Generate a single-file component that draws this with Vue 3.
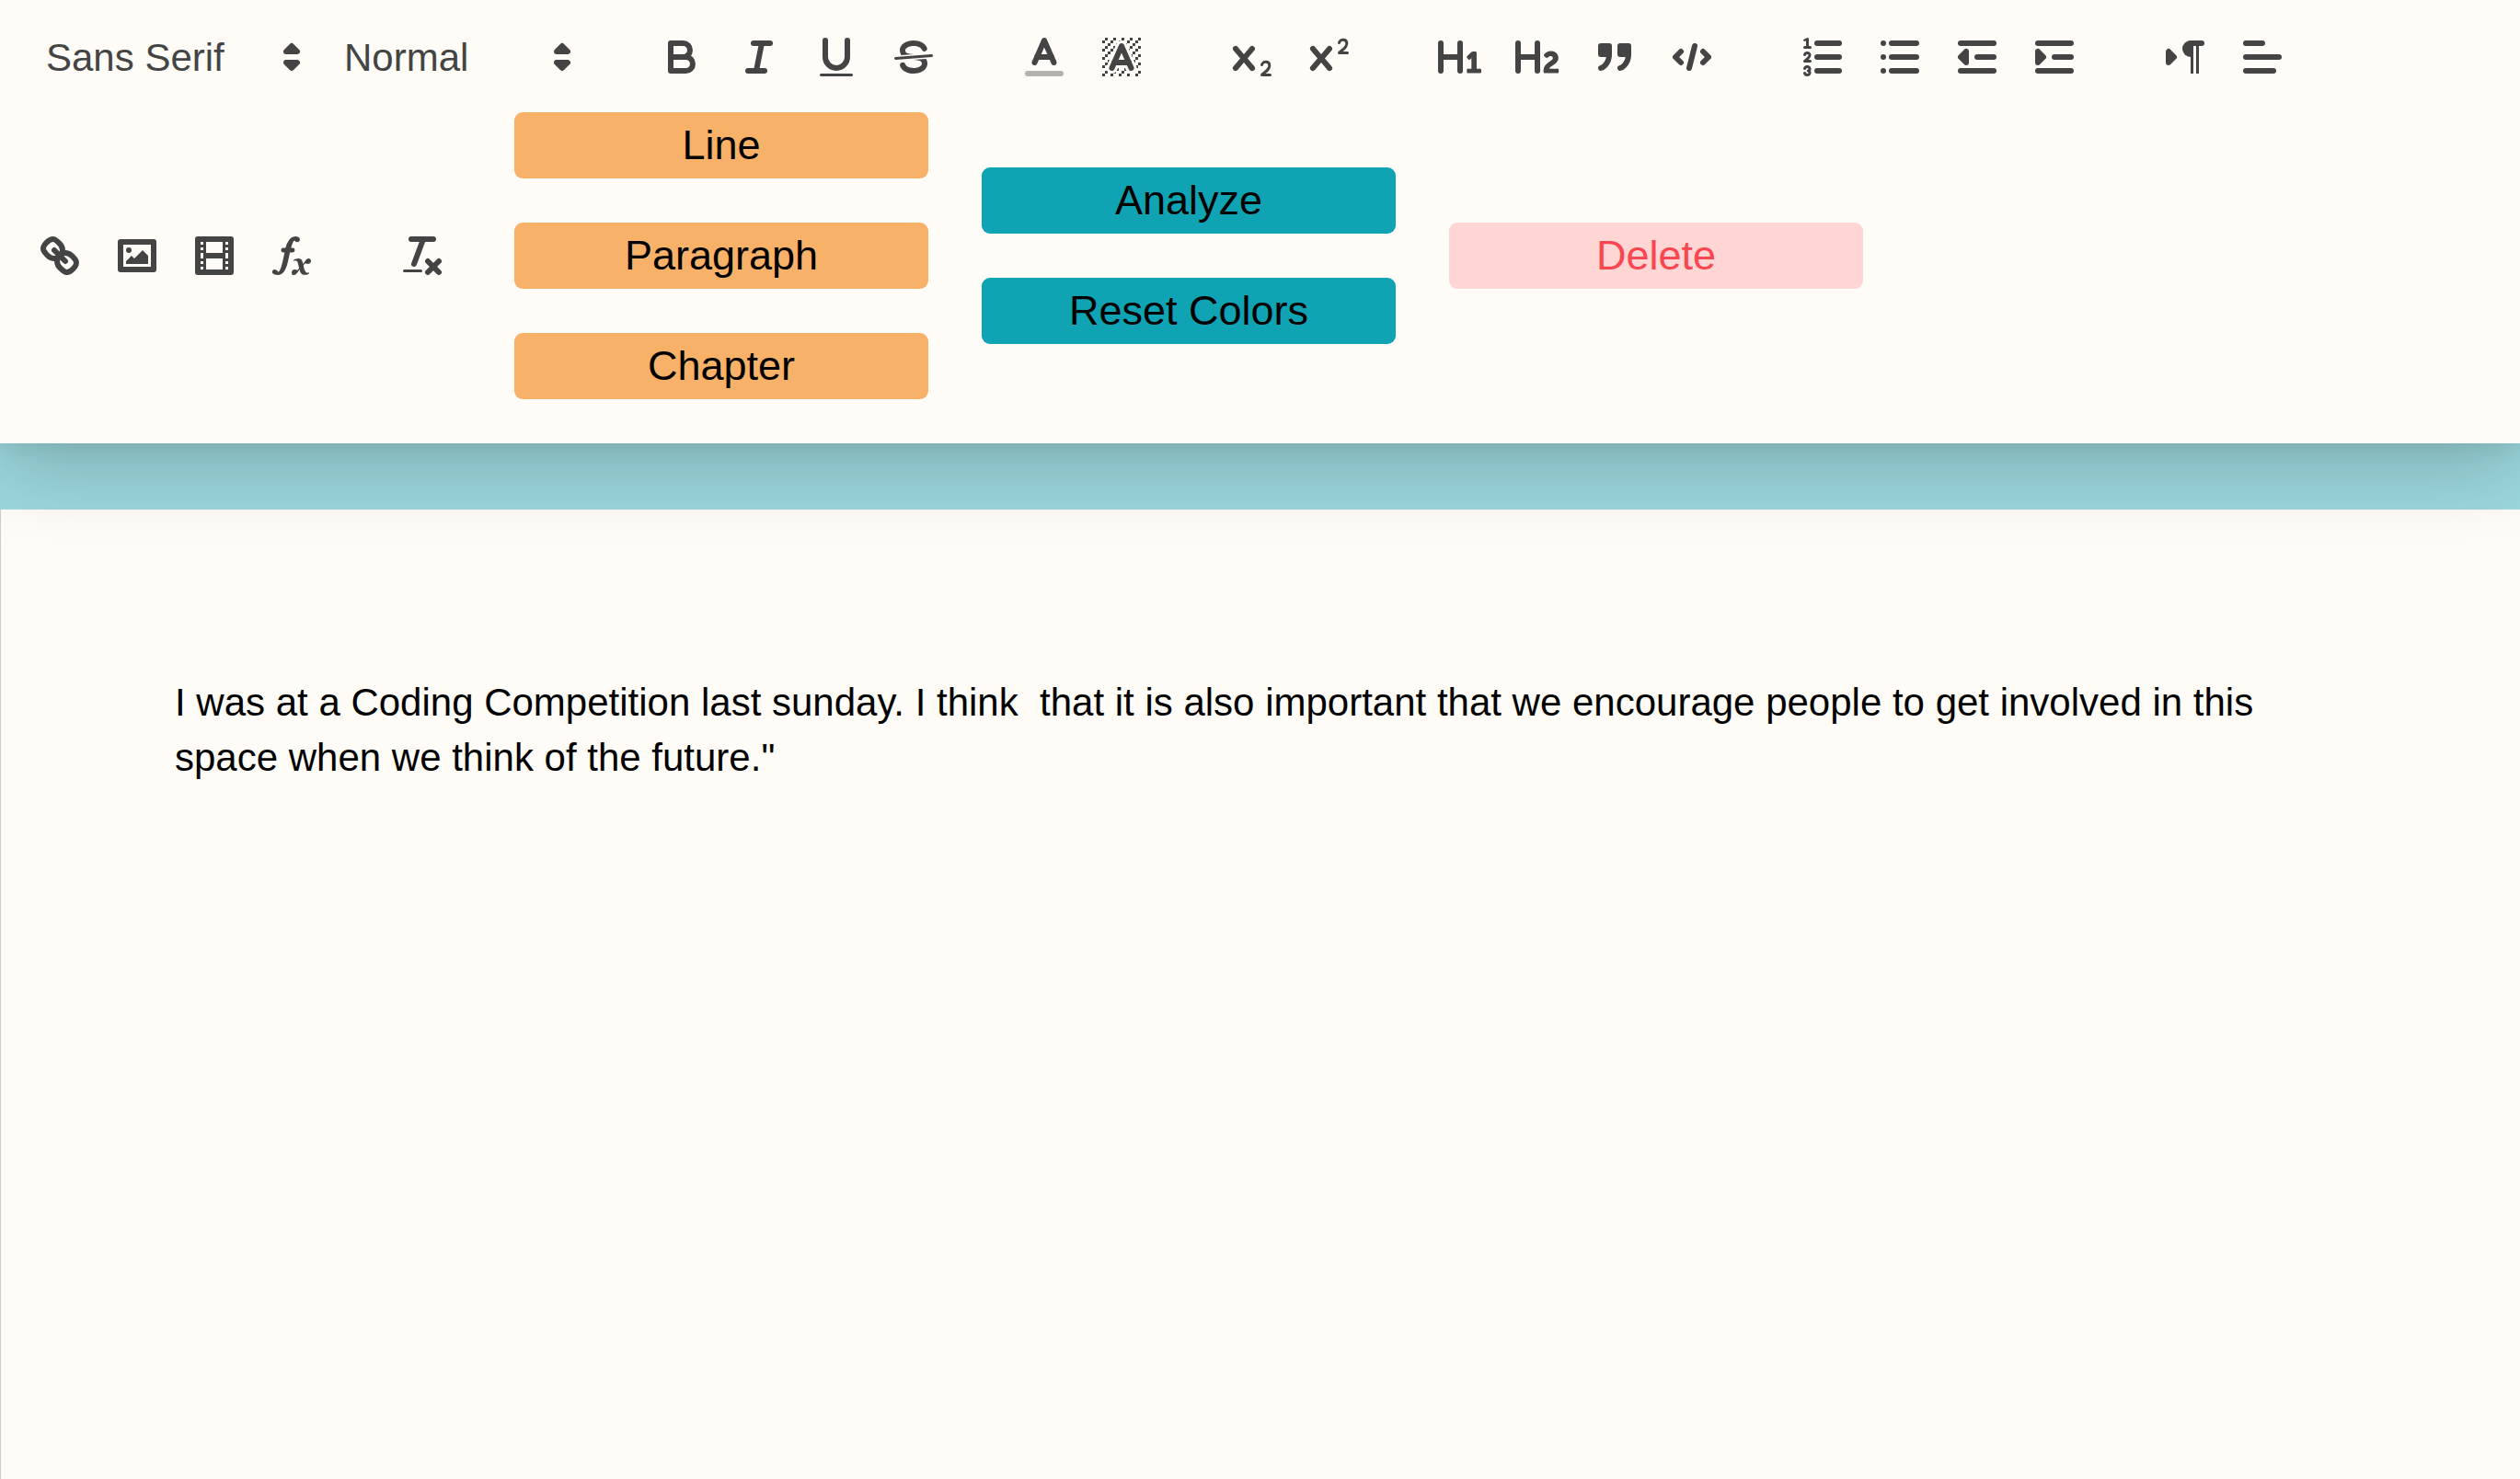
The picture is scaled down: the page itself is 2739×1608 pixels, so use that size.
<script setup>
import { ref } from 'vue'

const cross =
  '<path class="fill" d="M9.65,5.241a1,1,0,0,0-1.409.108L6,7.964,3.759,5.349A1,1,0,0,0,2.192,6.59178Q2.21541,6.6213,2.241,6.649L4.684,9.5,2.241,12.35A1,1,0,0,0,3.71,13.70722q0.02557-.02768.049-0.05722L6,11.036,8.241,13.65a1,1,0,1,0,1.567-1.24277Q9.78459,12.3777,9.759,12.35L7.316,9.5,9.759,6.651A1,1,0,0,0,9.65,5.241Z"/>'

const line = (x1, y1, x2, y2, cls = 'stroke') =>
  `<line class="${cls}" x1="${x1}" y1="${y1}" x2="${x2}" y2="${y2}"/>`

const box = (x, y, w, h) => `<rect class="fill" x="${x}" y="${y}" width="${w}" height="${h}"/>`

// Single-unit dots of the hatched highlight swatch
const dots = [
  [4, 4], [2, 6], [3, 5], [4, 7], [2, 12], [2, 9], [2, 15], [3, 8], [12, 2], [11, 3],
  [2, 3], [6, 2], [3, 2], [5, 3], [9, 2], [15, 14], [13, 7], [15, 5], [14, 6], [15, 8],
  [14, 9], [14, 3], [15, 2], [12, 5], [13, 4], [9, 14], [8, 15], [5, 15], [11, 15],
  [14, 15], [15, 11],
].map(([x, y]) => box(x, y, 1, 1)).join('')

const icons = {
  picker:
    '<polygon class="stroke fill" points="7 11 9 13 11 11 7 11"/><polygon class="stroke fill" points="7 7 9 5 11 7 7 7"/>',
  bold:
    '<path class="stroke" d="M5,4H9.5A2.5,2.5,0,0,1,12,6.5v0A2.5,2.5,0,0,1,9.5,9H5V4Z"/><path class="stroke" d="M5,9h5.5A2.5,2.5,0,0,1,13,11.5v0A2.5,2.5,0,0,1,10.5,14H5V9Z"/>',
  italic: line(7, 4, 13, 4) + line(5, 14, 11, 14) + line(8, 14, 10, 4),
  underline:
    '<path class="stroke" d="M5,3V9a4.012,4.012,0,0,0,4,4H9a4.012,4.012,0,0,0,4-4V3"/><rect class="fill" height="1" rx="0.5" ry="0.5" width="12" x="3" y="15"/>',
  strike:
    line(15.5, 8.5, 2.5, 9.5, 'stroke thin') +
    '<path class="fill" d="M9.007,8C6.542,7.791,6,7.519,6,6.5,6,5.792,7.283,5,9,5c1.571,0,2.765.679,2.969,1.309a1,1,0,0,0,1.9-.617C13.356,4.106,11.354,3,9,3,6.2,3,4,4.538,4,6.5a3.2,3.2,0,0,0,.5,1.843Z"/><path class="fill" d="M8.984,10C11.457,10.208,12,10.479,12,11.5c0,0.708-1.283,1.5-3,1.5-1.571,0-2.765-.679-2.969-1.309a1,1,0,1,0-1.9.617C4.644,13.894,6.646,15,9,15c2.8,0,5-1.538,5-3.5a3.2,3.2,0,0,0-.5-1.843Z"/>',
  color:
    line(3, 15, 15, 15, 'stroke faint') +
    '<polyline class="stroke" points="5.5 11 9 3 12.5 11"/>' +
    line(11.63, 9, 6.38, 9),
  background:
    dots +
    '<g class="fill"><polygon points="6 6.868 6 6 5 6 5 7 5.942 7 6 6.868"/><polygon points="6.817 5 6 5 6 6 6.38 6 6.817 5"/><polygon points="4 11.439 4 11 3 11 3 12 3.755 12 4 11.439"/><polygon points="4.63 10 4 10 4 11 4.192 11 4.63 10"/><path d="M10.832,4.2L11,4.582V4H10.708A1.948,1.948,0,0,1,10.832,4.2Z"/><path d="M7,4.582L7.168,4.2A1.929,1.929,0,0,1,7.292,4H7V4.582Z"/><path d="M8,13H7.683l-0.351.8a1.933,1.933,0,0,1-.124.2H8V13Z"/><path d="M9,3H8V3.282A1.985,1.985,0,0,1,9,3Z"/><polygon points="13.447 10.174 13.469 10.225 13.472 10.232 13.808 11 14 11 14 10 13.37 10 13.447 10.174"/><path d="M3.775,14H3v1H4V14.314A1.97,1.97,0,0,1,3.775,14Z"/><polygon points="12 6.868 12 6 11.62 6 12 6.868"/><polygon points="12.933 9 13 9 13 8 12.495 8 12.933 9"/><path d="M6,14.926V15H7V14.316A1.993,1.993,0,0,1,6,14.926Z"/><path d="M10.668,13.8L10.317,13H10v1h0.792A1.947,1.947,0,0,1,10.668,13.8Z"/><path d="M14.332,12.2a1.99,1.99,0,0,1,.166.8H15V12H14.245Z"/></g><polyline class="stroke" points="5.5 13 9 5 12.5 13"/>' +
    line(11.63, 11, 6.38, 11),
  sub:
    '<path class="fill" d="M15.5,15H13.861a3.858,3.858,0,0,0,1.914-2.975,1.8,1.8,0,0,0-1.6-1.751A1.921,1.921,0,0,0,12.021,11.7a0.50013,0.50013,0,1,0,.957.291h0a0.914,0.914,0,0,1,1.053-.725,0.81,0.81,0,0,1,.744.762c0,1.076-1.16971,1.86982-1.93971,2.43082A1.45639,1.45639,0,0,0,12,15.5a0.5,0.5,0,0,0,.5.5h3A0.5,0.5,0,0,0,15.5,15Z"/>' +
    cross,
  super:
    '<path class="fill" d="M15.5,7H13.861a4.015,4.015,0,0,0,1.914-2.975,1.8,1.8,0,0,0-1.6-1.751A1.922,1.922,0,0,0,12.021,3.7a0.5,0.5,0,1,0,.957.291,0.917,0.917,0,0,1,1.053-.725,0.81,0.81,0,0,1,.744.762c0,1.077-1.164,1.925-1.934,2.486A1.423,1.423,0,0,0,12,7.5a0.5,0.5,0,0,0,.5.5h3A0.5,0.5,0,0,0,15.5,7Z"/>' +
    cross,
  header1:
    '<path class="fill" d="M10,4V14a1,1,0,0,1-2,0V10H3v4a1,1,0,0,1-2,0V4A1,1,0,0,1,3,4V8H8V4a1,1,0,0,1,2,0Zm6.06787,9.209H14.98975V7.59863a.54085.54085,0,0,0-.605-.60547h-.62744a1.01119,1.01119,0,0,0-.748.29688L11.645,8.56641a.5435.5435,0,0,0-.022.8584l.28613.30762a.53861.53861,0,0,0,.84717.0332l.09912-.08789a1.2137,1.2137,0,0,0,.2417-.35254h.02246s-.01123.30859-.01123.60547V13.209H12.041a.54085.54085,0,0,0-.605.60547v.43945a.54085.54085,0,0,0,.605.60547h4.02686a.54085.54085,0,0,0,.605-.60547v-.43945A.54085.54085,0,0,0,16.06787,13.209Z"/>',
  header2:
    '<path class="fill" d="M16.73975,13.81445v.43945a.54085.54085,0,0,1-.605.60547H11.855a.58392.58392,0,0,1-.64893-.60547V14.0127c0-2.90527,3.39941-3.42187,3.39941-4.55469a.77675.77675,0,0,0-.84717-.78125,1.17684,1.17684,0,0,0-.83594.38477c-.2749.26367-.561.374-.85791.13184l-.4292-.34082c-.30811-.24219-.38525-.51758-.1543-.81445a2.97155,2.97155,0,0,1,2.45361-1.17676,2.45393,2.45393,0,0,1,2.68408,2.40918c0,2.45312-3.1792,2.92676-3.27832,3.93848h2.79443A.54085.54085,0,0,1,16.73975,13.81445ZM9,3A.99974.99974,0,0,0,8,4V8H3V4A1,1,0,0,0,1,4V14a1,1,0,0,0,2,0V10H8v4a1,1,0,0,0,2,0V4A.99974.99974,0,0,0,9,3Z"/>',
  blockquote:
    '<rect class="fill stroke" height="3" width="3" x="4" y="5"/><rect class="fill stroke" height="3" width="3" x="11" y="5"/><path class="even fill stroke" d="M7,8c0,4.031-3,5-3,5"/><path class="even fill stroke" d="M14,8c0,4.031-3,5-3,5"/>',
  code:
    '<polyline class="stroke" points="5 7 3 9 5 11"/><polyline class="stroke" points="13 7 15 9 13 11"/>' +
    line(10, 5, 8, 13),
  ordered:
    line(7, 4, 15, 4) + line(7, 9, 15, 9) + line(7, 14, 15, 14) +
    line(2.5, 5.5, 4.5, 5.5, 'stroke thin') +
    '<path class="fill" d="M3.5,6A0.5,0.5,0,0,1,3,5.5V3.085l-0.276.138A0.5,0.5,0,0,1,2.053,3c-0.124-.247-0.023-0.324.224-0.447l1-.5A0.5,0.5,0,0,1,4,2.5v3A0.5,0.5,0,0,1,3.5,6Z"/><path class="stroke thin" d="M4.5,10.5h-2c0-.234,1.85-1.076,1.85-2.234A0.959,0.959,0,0,0,2.5,8.156"/><path class="stroke thin" d="M2.5,14.846a0.959,0.959,0,0,0,1.85-.109A0.7,0.7,0,0,0,3.75,14a0.688,0.688,0,0,0,.6-0.736,0.959,0.959,0,0,0-1.85-.109"/>',
  bullet:
    line(6, 4, 15, 4) + line(6, 9, 15, 9) + line(6, 14, 15, 14) +
    line(3, 4, 3, 4) + line(3, 9, 3, 9) + line(3, 14, 3, 14),
  outdent:
    line(3, 14, 15, 14) + line(3, 4, 15, 4) + line(9, 9, 15, 9) +
    '<polyline class="fill stroke" points="5 7 5 11 3 9 5 7"/>',
  indent:
    line(3, 14, 15, 14) + line(3, 4, 15, 4) + line(9, 9, 15, 9) +
    '<polyline class="fill stroke" points="3 7 3 11 5 9 3 7"/>',
  direction:
    '<polygon class="stroke fill" points="3 11 5 9 3 7 3 11"/>' +
    line(15, 4, 11, 4) +
    '<path class="fill" d="M11,3a3,3,0,0,0,0,6h1V3H11Z"/>' +
    box(11, 4, 1, 11) + box(13, 4, 1, 11),
  align: line(3, 9, 15, 9) + line(3, 14, 13, 14) + line(3, 4, 9, 4),
  link:
    line(7, 7, 11, 11) +
    '<path class="even stroke" d="M8.9,4.577a3.476,3.476,0,0,1,.36,4.679A3.476,3.476,0,0,1,4.577,8.9C3.185,7.5,2.035,6.4,4.217,4.217S7.5,3.185,8.9,4.577Z"/><path class="even stroke" d="M13.423,9.1a3.476,3.476,0,0,0-4.679-.36,3.476,3.476,0,0,0,.36,4.679c1.392,1.392,2.5,2.542,4.679.36S14.815,10.5,13.423,9.1Z"/>',
  image:
    '<rect class="stroke" height="10" width="12" x="3" y="4"/><circle class="fill" cx="6" cy="7" r="1"/><polyline class="even fill" points="5 12 5 11 7 9 8 10 11 7 13 9 13 12 5 12"/>',
  video:
    '<rect class="stroke" height="12" width="12" x="3" y="3"/>' +
    box(5, 3, 1, 12) + box(12, 3, 1, 12) + box(5, 8, 8, 2) +
    [5, 7, 10, 12].map((y) => box(3, y, 3, 1) + box(12, y, 3, 1)).join(''),
  formula:
    '<path class="fill" d="M11.759,2.482a2.561,2.561,0,0,0-3.53.607A7.656,7.656,0,0,0,6.8,6.2C6.109,9.188,5.275,14.677,4.15,14.927a1.545,1.545,0,0,0-1.3-.933A0.922,0.922,0,0,0,2,15.036S1.954,16,4.119,16s3.091-2.691,3.7-5.553c0.177-.826.36-1.726,0.554-2.6L8.775,6.2c0.381-1.421.807-2.521,1.306-2.676a1.014,1.014,0,0,0,1.02.56A0.966,0.966,0,0,0,11.759,2.482Z"/><rect class="fill" height="1.6" rx="0.8" ry="0.8" width="5" x="5.15" y="6.2"/><path class="fill" d="M13.663,12.027a1.662,1.662,0,0,1,.266-0.276q0.193,0.069.456,0.138a2.1,2.1,0,0,0,.535.069,1.075,1.075,0,0,0,.767-0.3,1.044,1.044,0,0,0,.314-0.8,0.84,0.84,0,0,0-.238-0.619,0.8,0.8,0,0,0-.594-0.239,1.154,1.154,0,0,0-.781.3,4.607,4.607,0,0,0-.781,1q-0.091.15-.218,0.346l-0.246.38c-0.068-.288-0.137-0.582-0.212-0.885-0.459-1.847-2.494-.984-2.941-0.8-0.482.2-.353,0.647-0.094,0.529a0.869,0.869,0,0,1,1.281.585c0.217,0.751.377,1.436,0.527,2.038a5.688,5.688,0,0,1-.362.467,2.69,2.69,0,0,1-.264.271q-0.221-.08-0.471-0.147a2.029,2.029,0,0,0-.522-0.066,1.079,1.079,0,0,0-.768.3A1.058,1.058,0,0,0,9,15.131a0.82,0.82,0,0,0,.832.852,1.134,1.134,0,0,0,.787-0.3,5.11,5.11,0,0,0,.776-0.993q0.141-.219.215-0.34c0.046-.076.122-0.194,0.223-0.346a2.786,2.786,0,0,0,.918,1.726,2.582,2.582,0,0,0,2.376-.185c0.317-.181.212-0.565,0-0.494A0.807,0.807,0,0,1,14.176,15a5.159,5.159,0,0,1-.913-2.446l0,0Q13.487,12.24,13.663,12.027Z"/>',
  clean:
    line(5, 3, 13, 3) + line(6, 12, 9.35, 3) + line(11, 11, 15, 15) + line(15, 11, 11, 15) +
    '<rect class="fill" height="1" rx="0.5" ry="0.5" width="7" x="2" y="14"/>',
}

const font = ref('Sans Serif')
const size = ref('Normal')

const iconGroups = [
  [['bold', 'Bold'], ['italic', 'Italic'], ['underline', 'Underline'], ['strike', 'Strikethrough']],
  [['color', 'Text color'], ['background', 'Highlight color']],
  [['sub', 'Subscript'], ['super', 'Superscript']],
  [['header1', 'Heading 1'], ['header2', 'Heading 2'], ['blockquote', 'Quote'], ['code', 'Code block']],
  [['ordered', 'Numbered list'], ['bullet', 'Bulleted list'], ['outdent', 'Decrease indent'], ['indent', 'Increase indent']],
  [['direction', 'Text direction'], ['align', 'Align']],
  [['link', 'Link'], ['image', 'Image'], ['video', 'Video'], ['formula', 'Formula']],
  [['clean', 'Clear formatting']],
]

const actionGroups = [
  { tone: 'insert', labels: ['Line', 'Paragraph', 'Chapter'] },
  { tone: 'review', labels: ['Analyze', 'Reset Colors'] },
  { tone: 'danger', labels: ['Delete'] },
]

const content =
  'I was at a Coding Competition last sunday. I think\u00a0 that it is also important that we encourage people to get involved in this space when we think of the future."'
</script>

<template>
  <div class="page">
    <header class="toolbar" role="toolbar" aria-label="Formatting">
      <div class="group">
        <label class="picker picker-font">
          <select v-model="font" aria-label="Font">
            <option>Sans Serif</option>
            <option>Serif</option>
            <option>Monospace</option>
          </select>
          <svg class="icon" viewBox="0 0 18 18" aria-hidden="true" v-html="icons.picker"></svg>
        </label>
        <label class="picker picker-size">
          <select v-model="size" aria-label="Text size">
            <option>Small</option>
            <option>Normal</option>
            <option>Large</option>
            <option>Huge</option>
          </select>
          <svg class="icon" viewBox="0 0 18 18" aria-hidden="true" v-html="icons.picker"></svg>
        </label>
      </div>

      <div v-for="(group, i) in iconGroups" :key="i" class="group">
        <button v-for="[name, label] in group" :key="name" class="tool" type="button" :aria-label="label">
          <svg class="icon" viewBox="0 0 18 18" aria-hidden="true" v-html="icons[name]"></svg>
        </button>
      </div>

      <div v-for="group in actionGroups" :key="group.tone" class="actions">
        <button v-for="label in group.labels" :key="label" class="action" :class="group.tone" type="button">
          {{ label }}
        </button>
      </div>
    </header>

    <main class="editor" contenteditable="true" role="textbox" aria-multiline="true" aria-label="Document" spellcheck="false">
      <p>{{ content }}</p>
    </main>
  </div>
</template>

<style>
body {
  background: #9cd8dd;
}
</style>

<style scoped>
.page {
  display: flex;
  flex-direction: column;
  gap: 72px;
  min-height: 100vh;
  font-family: "Liberation Sans", Arial, Helvetica, sans-serif;
}

.toolbar {
  position: relative;
  z-index: 1;
  display: flex;
  flex-wrap: wrap;
  align-items: center;
  column-gap: 58px;
  padding: 26px 23px 24px;
  background: #fffcf7;
  box-shadow: 0 6px 18px rgba(0, 0, 0, 0.06), 0 24px 84px rgba(0, 0, 0, 0.2);
}

.group {
  display: flex;
}

.icon {
  display: block;
  width: 54px;
  height: 54px;
}

.icon :deep(.stroke) {
  fill: none;
  stroke: #444;
  stroke-width: 2;
  stroke-linecap: round;
  stroke-linejoin: round;
}

.icon :deep(.fill) {
  fill: #444;
}

.icon :deep(.thin) {
  stroke-width: 1;
}

.icon :deep(.even) {
  fill-rule: evenodd;
}

.icon :deep(.faint) {
  opacity: 0.4;
}

.tool {
  width: 84px;
  height: 72px;
  padding: 9px 15px;
  border: 0;
  background: none;
  cursor: pointer;
}

.picker {
  display: grid;
  align-items: center;
  height: 72px;
}

.picker-font {
  width: 324px;
}

.picker-size {
  width: 294px;
}

.picker select,
.picker .icon {
  grid-area: 1 / 1;
}

.picker select {
  width: 100%;
  height: 72px;
  padding: 0 60px 0 24px;
  border: 3px solid transparent;
  appearance: none;
  background: none;
  color: #444;
  font-family: inherit;
  font-size: 42px;
  font-weight: 500;
  cursor: pointer;
}

.picker .icon {
  justify-self: end;
  margin-right: 3px;
  pointer-events: none;
}

.actions {
  display: flex;
  flex-direction: column;
  gap: 48px;
  width: 450px;
  padding: 24px 0;
}

.action {
  height: 72px;
  padding: 0;
  border: 0;
  border-radius: 9px;
  font-family: inherit;
  font-size: 45px;
  cursor: pointer;
}

.insert {
  background: #f8b168;
  color: #000;
}

.review {
  background: #10a3b3;
  color: #000;
}

.danger {
  background: #ffd6d4;
  color: #f94650;
}

.editor {
  flex: 1;
  padding: 180px 189px;
  border-left: 1px solid #ccc;
  outline: none;
  background: #fffcf7;
  color: #000;
  font-size: 42px;
  line-height: 60px;
  white-space: pre-wrap;
}

.editor p {
  margin: 0;
}
</style>
